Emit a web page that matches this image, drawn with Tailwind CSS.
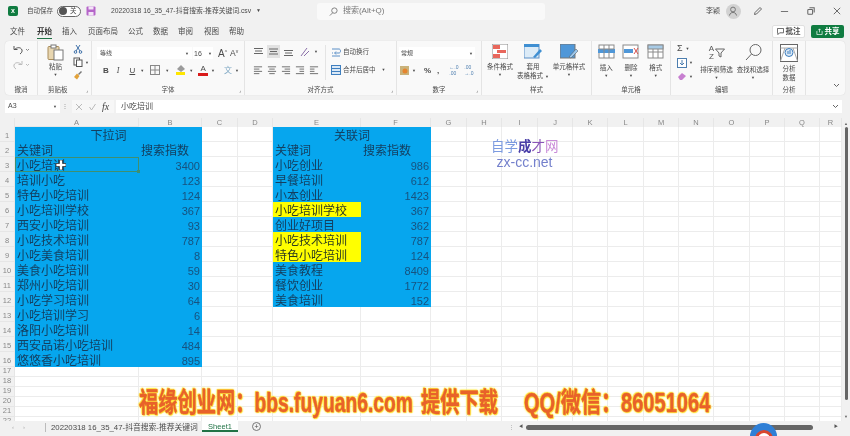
<!DOCTYPE html>
<html lang="zh">
<head>
<meta charset="utf-8">
<script src="https://cdn.jsdelivr.net/npm/@tailwindcss/browser@4"></script>
<title>Excel</title>
</head>
<body class="m-0 overflow-hidden">
<div class="relative w-[850px] h-[436px] overflow-hidden bg-[#f1f1f1] text-[#4a4a4a] blur-[0.6px] font-['Liberation_Sans','Noto_Sans_CJK_SC',sans-serif]">

  <!-- title bar -->
  <header class="flex items-center h-[22px] text-[7.5px]">
    <div class="ml-[8px] w-[10px] h-[10px] rounded-[2px] bg-[#107c41] text-white text-[7px] font-bold leading-[10px] text-center">x</div>
    <span class="ml-[9px] w-[27px] whitespace-nowrap text-[6.5px]">自动保存</span>
    <div class="ml-[3px] flex items-center w-[24px] h-[11px] rounded-full border border-[#666] bg-white pl-[1px]">
      <span class="w-[8px] h-[8px] rounded-full bg-[#555]"></span>
      <span class="ml-[3px] text-[6.5px] leading-none">关</span>
    </div>
    <svg class="ml-[5px] w-[10px] h-[10px]" viewBox="0 0 10 10"><rect x=".5" y=".5" width="9" height="9" rx="1" fill="#b565c9"/><rect x="2.500" y=".5" width="5" height="3" fill="#f3e4f7"/><rect x="2.500" y="6" width="5" height="3.500" fill="#f3e4f7"/></svg>
    <span class="ml-[15px] w-[141px] whitespace-nowrap text-[6.800px]">20220318 16_35_47-抖音搜索-推荐关键词.csv</span>
    <span class="ml-[4px] text-[5px]">▼</span>
    <div class="ml-[56px] flex items-center w-[228px] h-[17px] rounded-[3px] bg-[#f9f9f9] pl-[12px]">
      <svg class="w-[9px] h-[9px]" viewBox="0 0 10 10" fill="none" stroke="#777"><circle cx="6" cy="4" r="3"/><path d="M4 6.500 1 9.500"/></svg>
      <span class="ml-[5px] text-[8px] text-[#777]">搜索(Alt+Q)</span>
    </div>
    <span class="ml-[161px] w-[15px] whitespace-nowrap text-[7px]">李颖</span>
    <div class="ml-[5px] flex items-center justify-center w-[15px] h-[15px] rounded-full bg-[#d2d2d2]">
      <svg class="w-[10px] h-[10px]" viewBox="0 0 10 10" fill="none" stroke="#777"><circle cx="5" cy="3.500" r="2.400"/><path d="M1.500 9.500c.5-2.500 2-3 3.500-3s3 .5 3.500 3"/></svg>
    </div>
    <svg class="ml-[12px] w-[10px] h-[10px]" viewBox="0 0 10 10" fill="none" stroke="#666"><path d="M2 6.500 7 1.500l1.500 1.500-5 5-2 .5z"/></svg>
    <svg class="ml-[17px] w-[9px] h-[9px]" viewBox="0 0 10 10" stroke="#666"><path d="M1 5h8"/></svg>
    <svg class="ml-[18px] w-[8px] h-[8px]" viewBox="0 0 10 10" fill="none" stroke="#666" stroke-width="1.300"><rect x="1" y="3" width="6" height="6" rx="1"/><path d="M3 1h6v6"/></svg>
    <svg class="ml-[18px] w-[8px] h-[8px]" viewBox="0 0 10 10" stroke="#666" stroke-width="1.200"><path d="m1 1 8 8M9 1l-8 8"/></svg>
  </header>

  <!-- menu tabs -->
  <nav class="flex items-start h-[19px] pt-[3px] text-[7.5px] leading-[13px] relative">
    <span class="absolute left-[10px]">文件</span>
    <span class="absolute left-[37px] font-bold text-[#333] border-b-[1.5px] border-[#217346] h-[14px]">开始</span>
    <span class="absolute left-[62px]">插入</span>
    <span class="absolute left-[88px]">页面布局</span>
    <span class="absolute left-[128px]">公式</span>
    <span class="absolute left-[153px]">数据</span>
    <span class="absolute left-[178px]">审阅</span>
    <span class="absolute left-[204px]">视图</span>
    <span class="absolute left-[229px]">帮助</span>
    <div class="ml-[772px] flex items-center justify-center gap-[2px] w-[33px] h-[13px] bg-white border border-[#e0e0e0] rounded-[2px] text-[7.5px] font-bold">
      <svg class="w-[7px] h-[7px]" viewBox="0 0 8 8" fill="none" stroke="#555"><path d="M.5.5h7v5H3L1 7.500V5.500H.5z"/></svg>批注
    </div>
    <div class="ml-[6px] flex items-center justify-center gap-[2px] w-[33px] h-[13px] bg-[#107c41] rounded-[2px] text-white text-[7.5px] font-bold">
      <svg class="w-[7px] h-[7px]" viewBox="0 0 8 8" fill="none" stroke="#fff" stroke-width=".8"><path d="M1 3.500v4h6v-4M4 5V1M2.500 2.500 4 1l1.500 1.500"/></svg>共享
    </div>
  </nav>

  <!-- ribbon -->
  <section class="flex mx-[5px] h-[54px] rounded-[4px] bg-[#f9f9f9] text-[6.500px] leading-[9px] shadow-[0_0_1px_#ccc]">

    <div class="flex flex-col items-center w-[33px] border-r border-[#e4e4e4] pt-[3px]">
      <svg class="w-[20px] h-[12px]" viewBox="0 0 20 12" fill="none" stroke="#555"><path d="M3 2v3.500h3.500M3.500 5.500C6 3 10 3 11 6c.4 1.500-.5 3-2 4"/><path d="m15 5 1.500 1.500L18 5" stroke="#888"/></svg>
      <svg class="w-[20px] h-[12px] mt-[3px]" viewBox="0 0 20 12" fill="none" stroke="#bbb"><path d="M11 2v3.500H7.500M10.500 5.500C8 3 4 3 3 6c-.4 1.500.5 3 2 4"/><path d="m15 5 1.500 1.500L18 5"/></svg>
      <span class="mt-auto mb-[1px]">撤消</span>
    </div>

    <div class="relative flex flex-col w-[54px] border-r border-[#e4e4e4] pt-[3px]">
      <div class="flex pl-[9px]">
        <div class="flex flex-col items-center w-[17px]">
          <svg class="w-[17px] h-[17px]" viewBox="0 0 17 17" fill="none"><rect x="1" y="2.500" width="11" height="13" rx="1" fill="#e8d6b0" stroke="#a98c5a"/><rect x="4" y="1" width="5" height="3" fill="#fff" stroke="#777"/><rect x="7" y="6" width="9" height="10" fill="#fff" stroke="#777"/></svg>
          <span class="mt-[1px] whitespace-nowrap">粘贴</span>
          <span class="text-[4px] leading-[7px]">▼</span>
        </div>
        <div class="flex flex-col ml-[9px] gap-[3px]">
          <svg class="w-[10px] h-[10px]" viewBox="0 0 10 10" fill="none" stroke="#3d6fa8"><path d="m3 1 4 6M7 1 3 7"/><circle cx="2.500" cy="8" r="1.300"/><circle cx="7.500" cy="8" r="1.300"/></svg>
          <div class="flex items-center"><svg class="w-[10px] h-[10px]" viewBox="0 0 10 10" fill="#fff" stroke="#555"><rect x="1" y="1" width="5.500" height="7"/><rect x="3.500" y="3" width="5.500" height="6.500"/></svg><span class="ml-[2px] text-[4px]">▼</span></div>
          <svg class="w-[10px] h-[10px]" viewBox="0 0 10 10"><path d="M5 4 8 1l1 1-3 3z" fill="#777"/><path d="M1 7 4 3.500 6.500 6 4 9.500z" fill="#e2a23a"/></svg>
        </div>
      </div>
      <span class="mt-auto mb-[1px] ml-[10px]">剪贴板</span>
      <span class="absolute right-[3px] bottom-[2px] text-[5px] leading-none">⌟</span>
    </div>

    <div class="relative flex flex-col w-[153px] border-r border-[#e4e4e4] pt-[6px]">
      <div class="flex items-center h-[12px] pl-[5px]">
        <div class="flex items-center justify-between w-[95px] h-[12px] bg-white px-[3px] text-[6px]"><span>等线</span><span class="text-[4px]">▼</span></div>
        <div class="flex items-center justify-between w-[20px] h-[12px] bg-white ml-[1px] px-[1px] text-[7px]"><span>16</span><span class="text-[4px]">▼</span></div>
        <span class="ml-[5px] text-[10px]">A<sup class="text-[5px]">^</sup></span>
        <span class="ml-[3px] text-[8.500px]">A<sup class="text-[5px]">v</sup></span>
      </div>
      <div class="flex items-center h-[12px] mt-[5px] pl-[11px] text-[8px]">
        <b>B</b><i class="ml-[8px] font-serif">I</i><span class="ml-[10px] underline">U</span><span class="ml-[5px] text-[4px]">▼</span>
        <svg class="ml-[6px] w-[10px] h-[10px]" viewBox="0 0 10 10" fill="none" stroke="#888"><rect x=".5" y=".5" width="9" height="9"/><path d="M5 0v10M0 5h10"/></svg><span class="ml-[5px] text-[4px]">▼</span>
        <div class="ml-[7px] flex flex-col items-center w-[9px]"><svg class="w-[8px] h-[7px]" viewBox="0 0 8 7"><path d="M4 0 8 4 4 7 0 4z" fill="#9b9b9b"/></svg><span class="w-[9px] h-[3px] bg-[#ffe600]"></span></div><span class="ml-[4px] text-[4px]">▼</span>
        <div class="ml-[5px] flex flex-col items-center w-[10px]"><span class="text-[8px] leading-[7px]">A</span><span class="w-[10px] h-[3px] mt-[1px] bg-[#d91a1a]"></span></div><span class="ml-[3px] text-[4px]">▼</span>
        <span class="ml-[9px] text-[#7fa8c4]">文</span><span class="ml-[3px] text-[4px]">▼</span>
      </div>
      <span class="mt-auto mb-[1px] text-center">字体</span>
      <span class="absolute right-[3px] bottom-[2px] text-[5px] leading-none">⌟</span>
    </div>

    <div class="relative flex flex-col w-[152px] border-r border-[#e4e4e4] pt-[4px]">
      <div class="flex">
        <div class="flex flex-col w-[80px] pl-[8px]">
          <div class="flex items-center gap-[3px] h-[13px]">
            <svg class="w-[11px] h-[10px]" viewBox="0 0 11 10" stroke="#666"><path d="M1 1.500h9M2 4h7M1 6.500h9"/></svg>
            <svg class="w-[13px] h-[13px] bg-[#e2e2e2] p-[1px]" viewBox="0 0 11 10" stroke="#666"><path d="M1 2.500h9M2 5h7M1 7.500h9"/></svg>
            <svg class="w-[11px] h-[10px]" viewBox="0 0 11 10" stroke="#666"><path d="M1 3.500h9M2 6h7M1 8.500h9"/></svg>
            <svg class="ml-[3px] w-[11px] h-[10px]" viewBox="0 0 11 10" fill="none" stroke="#8a6fa8"><path d="M1 9 7 1M4 9l5-5"/></svg><span class="text-[4px]">▼</span>
          </div>
          <div class="flex items-center gap-[4px] h-[13px] mt-[5px]">
            <svg class="w-[10px] h-[10px]" viewBox="0 0 11 10" stroke="#666"><path d="M1 1.500h9M1 4h6M1 6.500h9M1 9h6"/></svg>
            <svg class="w-[10px] h-[10px]" viewBox="0 0 11 10" stroke="#666"><path d="M1 1.500h9M2.500 4h6M1 6.500h9M2.500 9h6"/></svg>
            <svg class="w-[10px] h-[10px]" viewBox="0 0 11 10" stroke="#666"><path d="M1 1.500h9M4 4h6M1 6.500h9M4 9h6"/></svg>
            <svg class="w-[10px] h-[10px]" viewBox="0 0 11 10" stroke="#666"><path d="M1 1.500h9M5 4h5M5 6.500h5M1 9h9"/></svg>
            <svg class="w-[10px] h-[10px]" viewBox="0 0 11 10" stroke="#666"><path d="M1 1.500h9M1 4h5M1 6.500h5M1 9h9"/></svg>
          </div>
        </div>
        <div class="flex flex-col border-l border-[#e4e4e4] pl-[5px] h-[35px]">
          <div class="flex items-center h-[13px] whitespace-nowrap">
            <svg class="w-[10px] h-[10px] mr-[2px]" viewBox="0 0 10 10" fill="none" stroke="#5b8fc7"><path d="M1 2h7c2 0 2 4 0 4H4M5 4.500 3.500 6 5 7.500M1 6h1M1 9h8"/></svg>自动换行
          </div>
          <div class="flex items-center h-[13px] mt-[5px] whitespace-nowrap">
            <svg class="w-[10px] h-[10px] mr-[2px]" viewBox="0 0 10 10" fill="#dbe9f6" stroke="#3f7fbf"><rect x=".5" y=".5" width="9" height="9"/><path d="M0 3.500h10M0 6.500h10"/></svg>合并后居中<span class="ml-[6px] text-[4px]">▼</span>
          </div>
        </div>
      </div>
      <span class="mt-auto mb-[1px] text-center">对齐方式</span>
      <span class="absolute right-[3px] bottom-[2px] text-[5px] leading-none">⌟</span>
    </div>

    <div class="relative flex flex-col w-[85px] border-r border-[#e4e4e4] pt-[6px]">
      <div class="flex items-center justify-between w-[76px] h-[12px] ml-[2px] bg-white px-[2px] text-[6px]"><span>常规</span><span class="text-[4px]">▼</span></div>
      <div class="flex items-center h-[12px] mt-[5px] ml-[3px] text-[8px]">
        <svg class="w-[9px] h-[9px]" viewBox="0 0 9 9"><rect width="9" height="9" fill="#c9b27a"/><circle cx="5" cy="5" r="2.500" fill="#e5842e"/></svg><span class="ml-[3px] text-[4px]">▼</span>
        <span class="ml-[8px] font-bold">%</span><span class="ml-[6px] font-bold">,</span>
        <span class="ml-[10px] w-[10px] text-[5px] leading-[6px] text-[#4d7eaf]">←.0<br>.00</span>
        <span class="ml-[5px] w-[10px] text-[5px] leading-[6px] text-[#4d7eaf]">.00<br>→.0</span>
      </div>
      <span class="mt-auto mb-[1px] text-center">数字</span>
      <span class="absolute right-[3px] bottom-[2px] text-[5px] leading-none">⌟</span>
    </div>

    <div class="flex flex-col w-[110px] border-r border-[#e4e4e4] pt-[3px]">
      <div class="flex pl-[1px]">
        <div class="flex flex-col items-center w-[34px]">
          <svg class="w-[16px] h-[15px]" viewBox="0 0 16 15"><rect width="16" height="15" fill="#fff" stroke="#888"/><rect x="1" y="1" width="7" height="4" fill="#e8675c"/><rect x="5" y="6" width="9" height="3" fill="#e8675c"/><rect x="1" y="10" width="7" height="4" fill="#e8675c"/></svg>
          <span class="mt-[3px] whitespace-nowrap">条件格式</span><span class="text-[4px] leading-[8px]">▼</span>
        </div>
        <div class="-ml-[1px] flex flex-col items-center w-[34px]">
          <svg class="w-[18px] h-[15px]" viewBox="0 0 18 15"><rect width="15" height="14" fill="#dcebf7" stroke="#5b8fc7"/><rect x="0" y="0" width="15" height="3" fill="#3f8fd2"/><path d="m9 13 7-8 2 2-7 7z" fill="#3f8fd2"/></svg>
          <span class="mt-[3px] whitespace-nowrap">套用</span><span class="whitespace-nowrap">表格格式 <span class="text-[4px]">▼</span></span>
        </div>
        <div class="ml-[2px] flex flex-col items-center w-[34px]">
          <svg class="w-[18px] h-[15px]" viewBox="0 0 18 15"><rect width="15" height="14" fill="#4f97d8" stroke="#777"/><path d="m9 13 7-8 2 2-7 7z" fill="#9cc7ec" stroke="#555" stroke-width=".5"/></svg>
          <span class="mt-[3px] whitespace-nowrap">单元格样式</span><span class="text-[4px] leading-[8px]">▼</span>
        </div>
      </div>
      <span class="mt-auto mb-[1px] text-center">样式</span>
    </div>

    <div class="flex flex-col w-[79px] border-r border-[#e4e4e4] pt-[3px]">
      <div class="flex justify-around px-[2px]">
        <div class="flex flex-col items-center w-[24px]">
          <svg class="w-[17px] h-[15px]" viewBox="0 0 17 15" fill="#fff" stroke="#8a8a8a"><rect x="1" y="1" width="15" height="13"/><rect x="0" y="5" width="17" height="4" fill="#4f97d8" stroke="none"/><path d="M1 5h15M6 1v13M11 1v13" fill="none"/></svg>
          <span class="mt-[4px]">插入</span><span class="text-[4px] leading-[8px]">▼</span>
        </div>
        <div class="flex flex-col items-center w-[24px]">
          <svg class="w-[17px] h-[15px]" viewBox="0 0 17 15" fill="#fff" stroke="#8a8a8a"><rect x="1" y="1" width="15" height="13"/><rect x="2" y="5" width="9" height="4" fill="#4f97d8" stroke="none"/><path d="M12 4l4 6M16 4l-4 6" stroke="#d9534f" fill="none"/></svg>
          <span class="mt-[4px]">删除</span><span class="text-[4px] leading-[8px]">▼</span>
        </div>
        <div class="flex flex-col items-center w-[24px]">
          <svg class="w-[17px] h-[15px]" viewBox="0 0 17 15" fill="#fff" stroke="#8a8a8a"><rect x="1" y="1" width="15" height="13"/><rect x="1" y="1" width="15" height="4" fill="#a8cbe6"/><path d="M1 8h15M6 5v9M11 5v9" fill="none"/></svg>
          <span class="mt-[4px]">格式</span><span class="text-[4px] leading-[8px]">▼</span>
        </div>
      </div>
      <span class="mt-auto mb-[1px] text-center">单元格</span>
    </div>

    <div class="flex flex-col w-[102px] border-r border-[#e4e4e4] pt-[2px]">
      <div class="flex">
        <div class="flex flex-col w-[27px] pl-[6px] gap-[3px] text-[9px] leading-[11px]">
          <div class="flex items-center">Σ<span class="ml-[3px] text-[4px]">▼</span></div>
          <div class="flex items-center"><svg class="w-[10px] h-[10px]" viewBox="0 0 10 10" fill="#fff" stroke="#4d7eaf"><rect x=".5" y=".5" width="9" height="9"/><path d="M5 2v5M3 5l2 2 2-2" fill="none"/></svg><span class="ml-[2px] text-[4px]">▼</span></div>
          <div class="flex items-center"><svg class="w-[10px] h-[9px]" viewBox="0 0 10 9"><path d="M1 5 5 1l4 3-4 4H3z" fill="#c77fd0"/></svg><span class="ml-[2px] text-[4px]">▼</span></div>
        </div>
        <div class="flex flex-col items-center w-[37px]">
          <div class="flex items-center h-[19px]"><span class="text-[8px] leading-[8px] text-[#555] w-[6px] text-center">A<br>Z</span>
          <svg class="w-[10px] h-[10px]" viewBox="0 0 10 10" fill="none" stroke="#666"><path d="M.5 1h9L6 5v4L4 8V5z"/></svg></div>
          <span class="mt-[3px] whitespace-nowrap">排序和筛选</span><span class="text-[4px] leading-[8px]">▼</span>
        </div>
        <div class="flex flex-col items-center w-[36px]">
          <svg class="w-[19px] h-[19px]" viewBox="0 0 19 19" fill="none" stroke="#666"><circle cx="11.500" cy="7" r="5.500"/><path d="M7.500 11 2 17"/></svg>
          <span class="mt-[3px] whitespace-nowrap">查找和选择</span><span class="text-[4px] leading-[8px]">▼</span>
        </div>
      </div>
      <span class="mt-auto mb-[1px] text-center">编辑</span>
    </div>

    <div class="flex flex-col items-center w-[33px] border-r border-[#e4e4e4] pt-[3px]">
      <svg class="w-[18px] h-[18px]" viewBox="0 0 18 18" fill="#fff" stroke="#666"><rect x=".5" y=".5" width="17" height="17"/><path d="M.5 4h17M5 4l-4.500 13M13 4l4.500 13" fill="none" stroke="#aaa"/><circle cx="9" cy="8.500" r="4" fill="#dbe9f6" stroke="#3f7fbf"/><path d="M8 7v3M10 6v4" stroke="#3f7fbf"/></svg>
      <span class="mt-[2px]">分析</span><span>数据</span>
      <span class="mt-auto mb-[1px]">分析</span>
    </div>
    <svg class="ml-auto mr-[5px] mt-[42px] w-[7px] h-[5px]" viewBox="0 0 7 5" fill="none" stroke="#666"><path d="m1 1 2.500 2.500L6 1"/></svg>
  </section>

  <!-- formula bar -->
  <div class="flex items-center h-[13px] mt-[5px] ml-[5px] text-[7px]">
    <div class="flex items-center justify-between w-[55px] h-[13px] bg-white px-[3px]"><span>A3</span><span class="text-[4px]">▼</span></div>
    <span class="w-[10px] text-center text-[6px] text-[#888]">⋮</span>
    <div class="flex items-center gap-[5px] ml-[2px] w-[42px] h-[13px] bg-[#f7f7f7] pl-[3px]">
      <svg class="w-[8px] h-[8px]" viewBox="0 0 8 8" stroke="#bbb"><path d="m1 1 6 6M7 1 1 7"/></svg>
      <svg class="w-[9px] h-[8px]" viewBox="0 0 8 8" fill="none" stroke="#bbb"><path d="m1 4 2 3 4-6"/></svg>
      <i class="font-['Liberation_Serif'] text-[10px] text-[#444]">fx</i>
    </div>
    <div class="flex items-center justify-between ml-[2px] w-[726px] h-[13px] bg-white pl-[5px] pr-[3px] text-[8px]">
      <span>小吃培训</span>
      <svg class="w-[7px] h-[5px]" viewBox="0 0 7 5" fill="none" stroke="#666"><path d="m1 1 2.500 2.500L6 1"/></svg>
    </div>
  </div>

  <!-- sheet grid, cells are filled in below -->
  <div class="mt-[5px] flex h-[303px]">
    <div id="sheet" class="grid w-[842px] h-[303px] overflow-hidden bg-white grid-cols-[15px_124px_63px_36px_35px_88px_70px_36px_35px_36px_35px_35px_36px_35px_35px_36px_35px_35px_22px] grid-rows-[9px_repeat(16,15px)_repeat(6,10px)]"></div>
    <div class="relative w-[8px] bg-[#f1f1f1]">
      <span class="absolute left-[3px] top-[9px] w-[3px] h-[273px] rounded-full bg-[#666]"></span>
      <span class="absolute left-[2px] top-[4px] text-[4px] leading-none text-[#666]">▲</span>
      <span class="absolute left-[2px] bottom-[2px] text-[4px] leading-none text-[#666]">▼</span>
    </div>
  </div>

  <!-- sheet tabs -->
  <footer class="flex items-start h-[15px] text-[7.5px] bg-[#f1f1f1]">
    <div class="flex w-[45px] pl-[12px] mt-[2px] gap-[9px] text-[6px] text-[#aaa]"><span>‹</span><span>›</span></div>
    <span class="mt-[2px] w-px h-[9px] bg-[#bbb]"></span>
    <span class="ml-[5px] w-[151px] text-[7.800px] leading-[13px] whitespace-nowrap">20220318 16_35_47-抖音搜索-推荐关键词</span>
    <span class="w-[36px] h-[12px] -mt-px bg-white border-b-2 border-[#217346] text-center leading-[13px] text-[#217346]">Sheet1</span>
    <div class="ml-[14px] mt-[1px] flex items-center justify-center w-[9px] h-[9px] rounded-full border border-[#777] text-[7px] leading-none">+</div>
    <span class="ml-[248px] mt-[3px] w-[2px] text-[5px] text-[#999]">⋮</span>
    <span class="ml-[8px] mt-[4px] w-[4px] text-[4px] leading-none text-[#555]">◀</span>
    <span class="ml-[3px] mt-[4px] w-[287px] h-[5px] rounded-full bg-[#666]"></span>
    <span class="ml-[21px] mt-[4px] text-[4px] leading-none text-[#555]">▶</span>
  </footer>

  <!-- circle badge cut off by the bottom edge -->
  <div class="absolute left-[750px] top-[423px] w-[27px] h-[27px] rounded-full bg-[#2f7fd6]">
    <div class="mx-auto mt-[7px] w-[18px] h-[18px] rounded-full bg-white border-[3px] border-[#d8452e]"></div>
  </div>

  <!-- site logo over the cells -->
  <div class="absolute left-[491px] top-[140px] w-[67px] text-center leading-none">
    <div class="text-[13.500px] whitespace-nowrap"><span class="text-[#7c9be0]">自学</span><span class="text-[#4a3fa8] font-bold">成</span><span class="text-[#8a55b8]">才</span><span class="text-[#c98ad8]">网</span></div>
    <div class="mt-[1px] text-[14px] text-[#7480cc] whitespace-nowrap">zx-cc.net</div>
  </div>

  <!-- selection handle and cursor on A3 -->
  <span class="absolute left-[137px] top-[170px] w-[3px] h-[3px] bg-[#3f8f6f]"></span>
  <svg class="absolute left-[56px] top-[160px] w-[10px] h-[10px]" viewBox="0 0 10 10"><path d="M3.500 0h3v3.500H10v3H6.500V10h-3V6.500H0v-3h3.500z" fill="#fff" stroke="#333" stroke-width=".8"/></svg>

  <!-- watermark, three pieces because the spacing in the video is uneven -->
  <div class="absolute left-[139px] top-[389px] origin-left scale-x-[0.7] whitespace-pre font-bold text-[27.500px] leading-[28px] text-[#e8622a] [-webkit-text-stroke:0.4px_#e8622a] [text-shadow:0_0_2px_#ffe83a,0_0_2px_#ffe83a,0_0_3px_#ffe83a,1px_1px_1px_#ffd92e,-1px_-1px_1px_#ffd92e]">福缘创业网：bbs.fuyuan6.com</div>
  <div class="absolute left-[421px] top-[389px] origin-left scale-x-[0.7] whitespace-pre font-bold text-[27.500px] leading-[28px] text-[#e8622a] [-webkit-text-stroke:0.4px_#e8622a] [text-shadow:0_0_2px_#ffe83a,0_0_2px_#ffe83a,0_0_3px_#ffe83a,1px_1px_1px_#ffd92e,-1px_-1px_1px_#ffd92e]">提供下载</div>
  <div class="absolute left-[524px] top-[389px] origin-left scale-x-[0.73] whitespace-pre font-bold text-[27.500px] leading-[28px] text-[#e8622a] [-webkit-text-stroke:0.4px_#e8622a] [text-shadow:0_0_2px_#ffe83a,0_0_2px_#ffe83a,0_0_3px_#ffe83a,1px_1px_1px_#ffd92e,-1px_-1px_1px_#ffd92e]">QQ/微信：86051064</div>
</div>

<script>
  const left = [
    ["小吃培训", 3400], ["培训小吃", 123], ["特色小吃培训", 124], ["小吃培训学校", 367],
    ["西安小吃培训", 93], ["小吃技术培训", 787], ["小吃美食培训", 8], ["美食小吃培训", 59],
    ["郑州小吃培训", 30], ["小吃学习培训", 64], ["小吃培训学习", 6], ["洛阳小吃培训", 14],
    ["西安品诺小吃培训", 484], ["悠悠香小吃培训", 895]
  ];
  const right = [
    ["小吃创业", 986], ["早餐培训", 612], ["小本创业", 1423], ["小吃培训学校", 367, 1],
    ["创业好项目", 362], ["小吃技术培训", 787, 1], ["特色小吃培训", 124, 1], ["美食教程", 8409],
    ["餐饮创业", 1772], ["美食培训", 152]
  ];
  const letters = ["A","B","C","D","E","F","G","H","I","J","K","L","M","N","O","P","Q","R"];
  const sheet = document.getElementById("sheet");

  function cell(cls, text) {
    const d = document.createElement("div");
    d.className = cls;
    if (text !== undefined) d.textContent = text;
    sheet.appendChild(d);
  }

  const head = "bg-[#f1f1f1] border-r border-[#e6e6e6] text-[7.5px] leading-[9px] text-center text-[#888] overflow-hidden";
  const rowHead = "flex items-end justify-center bg-[#f1f1f1] border-r border-b border-[#e6e6e6] text-[7.5px] leading-[10px] text-[#888] overflow-hidden";
  const blank = "bg-white border-r border-b border-[#ececec]";
  const blue = "bg-[#06a6ee] text-[12px] leading-[18px] text-[#143f60] whitespace-nowrap";
  const blueL = blue + " pl-[2px]";
  const blueR = "bg-[#06a6ee] leading-[18px] text-right pr-[2px] text-[11px] text-[#17527f] whitespace-nowrap";
  const blueC = blue + " text-center";
  const yellow = "bg-[#ffff00] text-[12px] leading-[18px] text-[#2b3a20] pl-[2px] whitespace-nowrap";

  cell(head);
  letters.forEach((l, i) => {
    cell(i === 0 ? head + " bg-[#d8d8d8] border-b border-[#217346] text-[#666]" : head, l);
  });

  for (let r = 1; r <= 22; r++) {
    cell(rowHead, r);
    for (let c = 0; c < 18; c++) {
      // A:B and E:F are the two coloured tables
      if (c === 0 && r <= 16) {
        if (r === 1) { cell(blueC + " col-span-2", "下拉词"); continue; }
        if (r === 2) { cell(blueL, "关键词"); continue; }
        const row = left[r - 3];
        if (r === 3) cell(blueL + " shadow-[inset_0_0_0_1px_#3f8f6f]", row[0]);
        else cell(blueL, row[0]);
        continue;
      }
      if (c === 1 && r <= 16) {
        if (r === 1) continue;
        if (r === 2) { cell(blueL, "搜索指数"); continue; }
        cell(blueR, left[r - 3][1]);
        continue;
      }
      if (c === 4 && r <= 12) {
        if (r === 1) { cell(blueC + " col-span-2", "关联词"); continue; }
        if (r === 2) { cell(blueL, "关键词"); continue; }
        const row = right[r - 3];
        cell(row[2] ? yellow : blueL, row[0]);
        continue;
      }
      if (c === 5 && r <= 12) {
        if (r === 1) continue;
        if (r === 2) { cell(blueL, "搜索指数"); continue; }
        cell(blueR, right[r - 3][1]);
        continue;
      }
      cell(blank);
    }
  }
</script>
</body>
</html>
